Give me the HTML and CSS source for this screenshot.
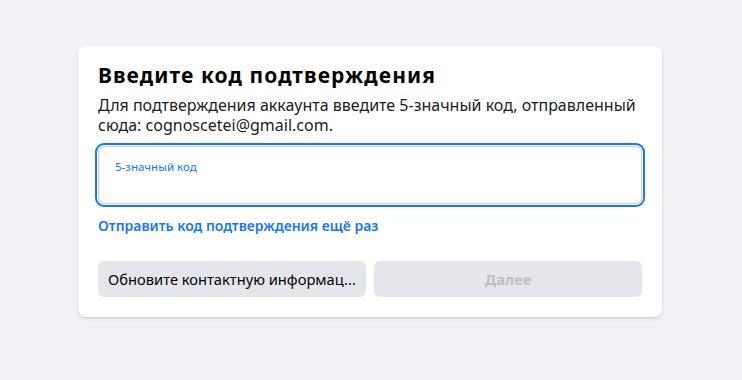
FILE: index.html
```html
<!DOCTYPE html>
<html lang="ru">
<head>
<meta charset="utf-8">
<link rel="stylesheet" href="styles.css">
</head>
<body>
<div class="card">
  <h1 class="title">Введите код подтверждения</h1>
  <p class="desc">Для подтверждения аккаунта введите 5-значный код, отправленный сюда: cognoscetei@gmail.com.</p>
  <div class="field">
    <span class="field-label">5-значный код</span>
  </div>
  <a class="resend" href="#">Отправить код подтверждения ещё раз</a>
  <div class="actions">
    <button class="btn btn-secondary"><span class="btn-text">Обновите контактную информац...</span></button>
    <button class="btn btn-disabled"><span class="btn-text">Далее</span></button>
  </div>
</div>
</body>
</html>
```

FILE: styles.css
```css
html, body {
  margin: 0;
  padding: 0;
}
body {
  background: #f0f2f5;
  font-family: "Noto Sans", "Open Sans", sans-serif;
  color: #1c1e21;
  height: 380px;
  padding-top: 46px;
  box-sizing: border-box;
}
.card {
  width: 584px;
  margin: 0 0 0 78px;
  background: #fff;
  border-radius: 8px;
  box-shadow: 0 1px 2px rgba(0,0,0,0.12), 0 2px 4px rgba(0,0,0,0.05);
  padding: 17px 20px 20px;
  box-sizing: border-box;
}
.title {
  margin: 0;
  font-size: 21px;
  line-height: 24px;
  font-weight: 700;
  letter-spacing: 1.1px;
  color: #050505;
}
.desc {
  margin: 8px 0 0;
  font-size: 16px;
  line-height: 20px;
  color: #1c1e21;
}
.field {
  margin-top: 11px;
  height: 58px;
  border: 1px solid #ccd0d5;
  border-radius: 6px;
  box-shadow: 0 0 0 1px #fff, 0 0 0 3px #1877f2;
  padding: 13px 16px 0;
  box-sizing: border-box;
}
.field-label {
  display: block;
  font-size: 11.5px;
  line-height: 14px;
  color: #1877f2;
}
.resend {
  display: inline-block;
  margin-top: 13px;
  font-size: 14px;
  line-height: 18px;
  font-weight: 600;
  color: #1877f2;
  text-decoration: none;
}
.actions {
  margin-top: 25px;
  display: flex;
  gap: 8px;
}
.btn {
  flex: 1 1 0;
  min-width: 0;
  height: 36px;
  border: none;
  border-radius: 6px;
  background: #e4e6eb;
  font-family: inherit;
  font-size: 14.7px;
  padding: 0 8px;
  white-space: nowrap;
  overflow: hidden;
}
.btn-secondary {
  color: #050505;
  font-weight: 400;
}
.btn-disabled {
  color: #bcc0c4;
  font-weight: 700;
}
```
